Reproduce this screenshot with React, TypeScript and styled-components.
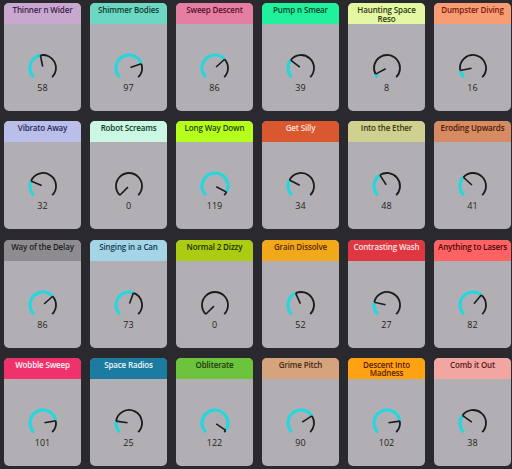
import React from 'react';
import styled, { createGlobalStyle } from 'styled-components';

interface MacroType {
  name: string;
  value: number;
  color: string;
  ink: string;
  wrap?: boolean;
}

const macros: MacroType[] = [
  { name: 'Thinner n Wider', value: 58, color: '#c8a8cf', ink: '#3a1e4c' },
  { name: 'Shimmer Bodies', value: 97, color: '#6cd8c2', ink: '#0c3c34' },
  { name: 'Sweep Descent', value: 86, color: '#e47fa2', ink: '#5c0e2c' },
  { name: 'Pump n Smear', value: 39, color: '#1ff29b', ink: '#0a3d26' },
  { name: 'Haunting Space Reso', value: 8, color: '#e4f7a2', ink: '#2c3a10', wrap: true },
  { name: 'Dumpster Diving', value: 16, color: '#f89c74', ink: '#7a1808' },
  { name: 'Vibrato Away', value: 32, color: '#b9bfe8', ink: '#1f2858' },
  { name: 'Robot Screams', value: 0, color: '#cbf8e2', ink: '#0d3a28' },
  { name: 'Long Way Down', value: 119, color: '#b6ff1c', ink: '#263e00' },
  { name: 'Get Silly', value: 34, color: '#d9582f', ink: '#f6e4dc' },
  { name: 'Into the Ether', value: 48, color: '#d0d190', ink: '#38380e' },
  { name: 'Eroding Upwards', value: 41, color: '#d68b62', ink: '#4a1a08' },
  { name: 'Way of the Delay', value: 86, color: '#8e8c90', ink: '#1c1c20' },
  { name: 'Singing in a Can', value: 73, color: '#a6d4e7', ink: '#0e3a50' },
  { name: 'Normal 2 Dizzy', value: 0, color: '#abcc12', ink: '#223000' },
  { name: 'Grain Dissolve', value: 52, color: '#f1a91a', ink: '#5a2a00' },
  { name: 'Contrasting Wash', value: 27, color: '#e03641', ink: '#fbe6e6' },
  { name: 'Anything to Lasers', value: 82, color: '#ff6262', ink: '#4a0808' },
  { name: 'Wobble Sweep', value: 101, color: '#f0326c', ink: '#fff2f5' },
  { name: 'Space Radios', value: 25, color: '#1b7ba1', ink: '#eef8fc' },
  { name: 'Obliterate', value: 122, color: '#6cc33c', ink: '#183a08' },
  { name: 'Grime Pitch', value: 90, color: '#d5a47c', ink: '#4a2410' },
  { name: 'Descent Into Madness', value: 102, color: '#ffa212', ink: '#5a1a00', wrap: true },
  { name: 'Comb it Out', value: 38, color: '#f2a6a2', ink: '#5a1a18' },
];

const R = 13;
const C = 15;

// angle measured clockwise from 12 o'clock
function point(deg: number, r: number) {
  const rad = (deg * Math.PI) / 180;
  return [C + r * Math.sin(rad), C - r * Math.cos(rad)];
}

function arc(from: number, to: number) {
  const [x1, y1] = point(from, R);
  const [x2, y2] = point(to, R);
  const large = to - from > 180 ? 1 : 0;
  return `M ${x1} ${y1} A ${R} ${R} 0 ${large} 1 ${x2} ${y2}`;
}

function Knob({ value }: { value: number }) {
  const start = -135;
  const end = 135;
  const angle = start + (270 * value) / 127;
  const [px1, py1] = point(angle, 1.5);
  const [px2, py2] = point(angle, R);
  return (
    <svg width="30" height="30" viewBox="0 0 30 30">
      {angle < end - 1 && (
        <path d={arc(angle, end)} fill="none" stroke="#1b1a1c" strokeWidth="1.8" />
      )}
      {angle > start + 1 && (
        <path d={arc(start, angle)} fill="none" stroke="#27d6dc" strokeWidth="3.2" />
      )}
      <line x1={px1} y1={py1} x2={px2} y2={py2} stroke="#1b1a1c" strokeWidth="1.6" />
    </svg>
  );
}

function MacroCard({ macro }: { macro: MacroType }) {
  return (
    <Card>
      <Header color={macro.color} $ink={macro.ink} $wrap={!!macro.wrap}>
        {macro.name}
      </Header>
      <Body>
        <Knob value={macro.value} />
        <Value>{macro.value}</Value>
      </Body>
    </Card>
  );
}

function App() {
  return (
    <>
      <GlobalStyle />
      <Grid>
        {macros.map((m, i) => (
          <MacroCard key={i} macro={m} />
        ))}
      </Grid>
    </>
  );
}

export default App;

// Styles
const GlobalStyle = createGlobalStyle`
  html, body {
    margin: 0;
    padding: 0;
    background: #2a292e;
  }
  body {
    font-family: 'Open Sans', 'Liberation Sans', sans-serif;
  }
`;

const Grid = styled.div`
  display: grid;
  grid-template-columns: repeat(6, 77px);
  grid-auto-rows: 108px;
  column-gap: 9px;
  row-gap: 10.3px;
  padding: 3px 0 0 4px;
  width: 512px;
  height: 469px;
  box-sizing: border-box;
  background: #2a292e;
`;

const Card = styled.div`
  display: flex;
  flex-direction: column;
  border-radius: 5px;
  overflow: hidden;
  background: #b1afb3;
`;

const Header = styled.div<{ color: string; $ink: string; $wrap: boolean }>`
  height: 21px;
  flex-shrink: 0;
  box-sizing: border-box;
  padding: 3px ${(p) => (p.$wrap ? '8px' : '0')} 0;
  background: ${(p) => p.color};
  color: ${(p) => p.$ink};
  font-size: 8px;
  font-weight: 600;
  line-height: 8.5px;
  letter-spacing: -0.15px;
  text-align: center;
  white-space: ${(p) => (p.$wrap ? 'normal' : 'nowrap')};
`;

const Body = styled.div`
  display: flex;
  flex-direction: column;
  align-items: center;
  padding-top: 29px;
`;

const Value = styled.div`
  font-size: 9px;
  line-height: 10px;
  color: #1e1e22;
`;
